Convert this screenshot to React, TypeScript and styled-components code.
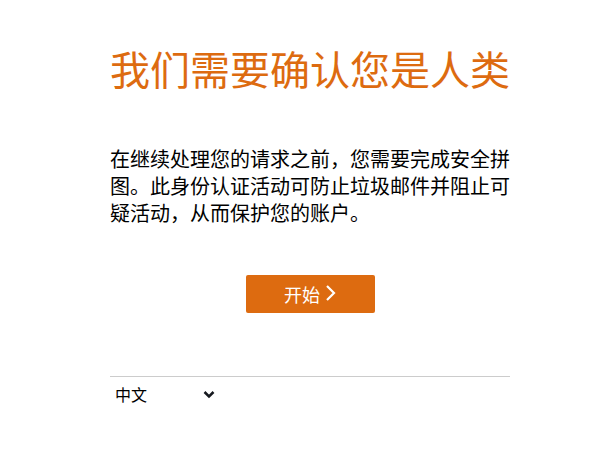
import React from "react";
import styled, { createGlobalStyle } from "styled-components";

const GlobalStyle = createGlobalStyle`
  body {
    margin: 0;
    background: #ffffff;
    font-family: "Noto Sans CJK SC", "Noto Sans", sans-serif;
    color: #16191f;
  }
`;

const Page = styled.main`
  width: 400px;
  margin: 0 auto;
  padding: 42px 0 0 12px;
`;

const Title = styled.h1`
  margin: 0;
  font-size: 40px;
  line-height: 52px;
  font-weight: 400;
  color: #dd6b10;
  white-space: nowrap;
`;

const Message = styled.p`
  margin: 51px 0 0;
  font-size: 20px;
  line-height: 27px;
  color: #000;
`;

const Actions = styled.div`
  display: flex;
  justify-content: center;
  margin-top: 49px;
`;

const StartButton = styled.button`
  display: flex;
  align-items: center;
  justify-content: center;
  gap: 4px;
  width: 129px;
  height: 38px;
  border: none;
  border-radius: 2px;
  background: #dd6b10;
  color: #fff;
  font-family: inherit;
  font-size: 18px;
  cursor: pointer;
  svg {
    margin-top: -3px;
  }
`;

const Footer = styled.div`
  margin-top: 63px;
  border-top: 1px solid #cccccc;
  padding-top: 3px;
`;

const LangPicker = styled.label`
  position: relative;
  display: inline-flex;
  align-items: center;
  width: 106px;
  svg {
    position: absolute;
    right: 0;
    pointer-events: none;
  }
`;

const LangSelect = styled.select`
  appearance: none;
  width: 100%;
  border: none;
  background: transparent;
  padding: 2px 0 2px 5px;
  font-family: inherit;
  font-size: 16px;
  color: #000;
  outline: none;
`;

export default function App() {
  return (
    <>
      <GlobalStyle />
      <Page>
        <Title>我们需要确认您是人类</Title>
        <Message>
          在继续处理您的请求之前，您需要完成安全拼图。此身份认证活动可防止垃圾邮件并阻止可疑活动，从而保护您的账户。
        </Message>
        <Actions>
          <StartButton>
            开始
            <svg width="12" height="18" viewBox="0 0 12 18" fill="none">
              <path d="M3 2l7 7-7 7" stroke="#fff" strokeWidth="2.2" />
            </svg>
          </StartButton>
        </Actions>
        <Footer>
          <LangPicker>
            <LangSelect defaultValue="zh">
              <option value="zh">中文</option>
              <option value="en">English</option>
            </LangSelect>
            <svg width="14" height="10" viewBox="0 0 14 10" fill="none">
              <path d="M2.5 3l4.5 4.5L11.5 3" stroke="#16191f" strokeWidth="2.5" />
            </svg>
          </LangPicker>
        </Footer>
      </Page>
    </>
  );
}
